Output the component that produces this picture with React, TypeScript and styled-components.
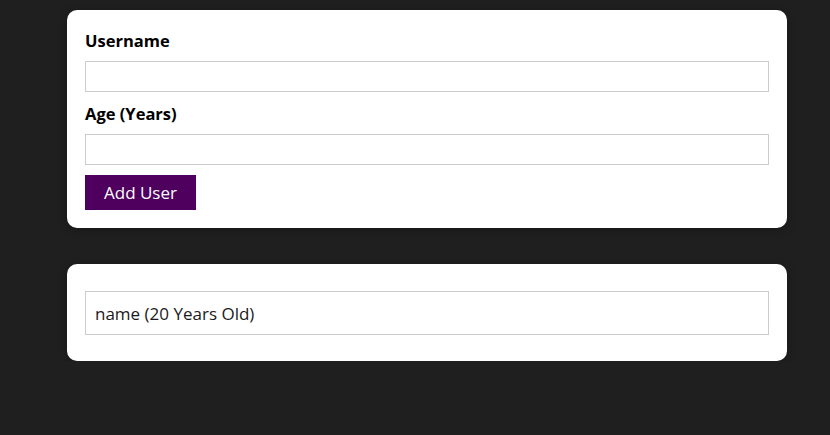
import styled, { createGlobalStyle } from "styled-components";

const GlobalStyle = createGlobalStyle`
  html, body {
    margin: 0;
    background: #1f1f1f;
    font-family: "Open Sans", "Noto Sans", sans-serif;
  }
  * { box-sizing: border-box; }
`;

const Page = styled.main`
  padding: 10px 43px 0 67px;
  display: flex;
  flex-direction: column;
  gap: 36px;
`;

const Card = styled.section<{ $pad: string }>`
  width: 720px;
  background: #fff;
  border-radius: 10px;
  box-shadow: 0 2px 8px rgba(0, 0, 0, 0.26);
  padding: ${(p) => p.$pad};
`;

const Form = styled.form`
  display: flex;
  flex-direction: column;
  align-items: flex-start;
`;

const Label = styled.label`
  font-weight: 700;
  font-size: 16.5px;
  line-height: 24px;
  color: #000;
  margin-bottom: 8px;
`;

const Input = styled.input`
  width: 100%;
  height: 31px;
  border: 1px solid #ccc;
  font: inherit;
  padding: 2px 6px;
  margin-bottom: 10px;
  outline: none;
`;

const Button = styled.button`
  height: 35px;
  padding: 0 18px;
  border: 1px solid #4f005f;
  background: #4f005f;
  color: #fff;
  font-family: inherit;
  font-size: 17px;
  cursor: pointer;
`;

const List = styled.ul`
  list-style: none;
  margin: 0;
  padding: 0;
`;

const Item = styled.li`
  border: 1px solid #ccc;
  height: 44px;
  padding: 0 9px;
  display: flex;
  align-items: center;
  font-size: 17px;
  color: #1a1a1a;
`;

export default function App() {
  return (
    <>
      <GlobalStyle />
      <Page>
        <Card $pad="19px 18px 18px">
          <Form onSubmit={(e) => e.preventDefault()}>
            <Label htmlFor="username">Username</Label>
            <Input id="username" type="text" />
            <Label htmlFor="age">Age (Years)</Label>
            <Input id="age" type="number" />
            <Button type="submit">Add User</Button>
          </Form>
        </Card>
        <Card $pad="27px 18px 26px">
          <List>
            <Item>name (20 Years Old)</Item>
          </List>
        </Card>
      </Page>
    </>
  );
}
